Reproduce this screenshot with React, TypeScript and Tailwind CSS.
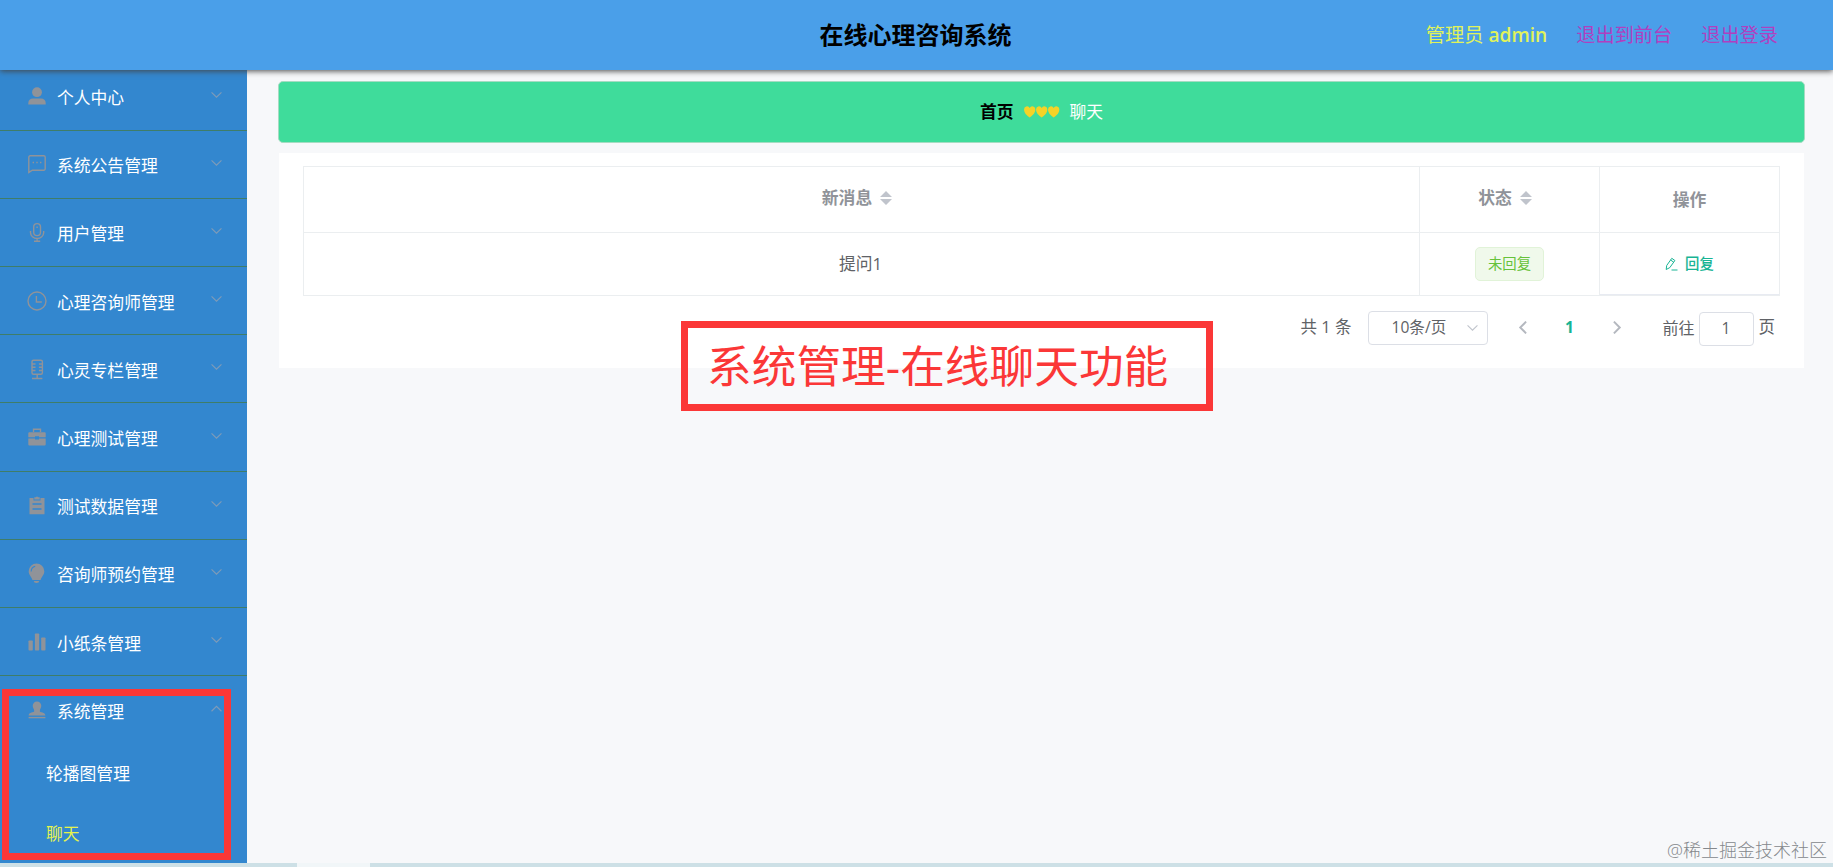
import React from "react";

type IconName =
  | "user" | "chat" | "mic" | "clock" | "studio" | "case" | "clip" | "bulb" | "bars" | "stamp";

const solid = { fill: "currentColor", stroke: "none" };

const icons: Record<IconName, React.ReactNode> = {
  user: (
    <g {...solid}>
      <circle cx="9" cy="5.2" r="4.9" />
      <path d="M0.3 17.6V16C0.3 13 2.3 11.4 4.9 11.4H13.1C15.7 11.4 17.7 13 17.7 16V17.6Z" />
    </g>
  ),
  chat: (
    <g>
      <path d="M0.8 17.4V2.2a1.4 1.4 0 0 1 1.4-1.4h13.6a1.4 1.4 0 0 1 1.4 1.4v11.6a1.4 1.4 0 0 1-1.400 1.400H4.400z" />
      <path d="M4.600 7.500h1.400M8.300 7.500h1.400M12 7.500h1.400" strokeWidth="1.5" />
    </g>
  ),
  mic: (
    <g>
      <rect x="5.7" y="0.600" width="6.800" height="12" rx="3.400" />
      <path d="M2.500 8v1.500a6.600 6 0 0 0 13.200 0V8M9.100 15.500v2.400M6 18.200h6.200M9.100 3.500v1.500" />
    </g>
  ),
  clock: (
    <g>
      <circle cx="9" cy="9" r="9" />
      <path d="M8.400 4v6h5.400" />
    </g>
  ),
  studio: (
    <g>
      <rect x="4" y="0.200" width="10.400" height="14" rx="1.500" />
      <path d="M4 4h3.500M4 7.300h3.500M4 10.500h3.500M14.400 4h-3.500M14.400 7.300h-3.500M14.400 10.500h-3.500M9.200 14.200v4M4 18.500h10.400" />
    </g>
  ),
  case: (
    <g>
      <path {...solid} d="M0.300 5.200a1 1 0 0 1 1-1h15.400a1 1 0 0 1 1 1v4H11v-1H7v1H0.300zM0.300 10.400H7v1.200h4v-1.200h6.700v6.200a1 1 0 0 1-1 1H1.300a1 1 0 0 1-1-1z" />
      <path d="M5.500 4V1.200h7V4" />
    </g>
  ),
  clip: (
    <g>
      <path {...solid} d="M1.500 2h4v2.500h7V2h4v16.300h-15z" />
      <path {...solid} d="M6.300 1.200h1.500a1.500 1.500 0 0 1 2.400 0h1.500v2.300H6.300z" />
      <path d="M4.500 8h9M4.500 13h9" stroke="#3387cf" strokeWidth="1.3" />
    </g>
  ),
  bulb: (
    <g>
      <path {...solid} d="M8.500-0.500a7.800 7.800 0 0 1 7.800 7.800c0 4-2.800 5.300-3.700 8.700H4.400C3.500 12.600 0.700 11.300 0.700 7.300A7.800 7.800 0 0 1 8.500-0.500zM5.800 17h5.400a2.700 2 0 0 1-5.400 0z" />
      <path d="M3.200 7.500a5.300 5.300 0 0 1 4-5.300" stroke="#3387cf" strokeWidth="1.1" />
    </g>
  ),
  bars: (
    <g {...solid}>
      <rect x="0.500" y="7.500" width="4.300" height="10" rx="0.700" />
      <rect x="6.900" y="0.500" width="4.300" height="17" rx="0.700" />
      <rect x="13.200" y="4.500" width="4.300" height="13" rx="0.700" />
    </g>
  ),
  stamp: (
    <g {...solid}>
      <path d="M9 0.500a4.300 4.300 0 0 1 4.300 4.300C13.300 7 11.800 7.800 11.800 10.200C11.800 11.600 17.400 11 17.400 14.500H0.600C0.600 11 6.200 11.600 6.200 10.200C6.200 7.800 4.700 7 4.700 4.800A4.300 4.300 0 0 1 9 0.500z" />
      <rect x="0.600" y="15.900" width="16.800" height="1.400" />
    </g>
  ),
};

function MenuIcon({ name }: { name: IconName }) {
  return (
    <svg className="h-[18px] w-[18px] overflow-visible text-[#909399]" viewBox="0 0 18 18" fill="none" stroke="currentColor" strokeWidth="1.4">
      {icons[name]}
    </svg>
  );
}

function Arrow({ className, d }: { className: string; d: string }) {
  return (
    <svg className={className} viewBox="0 0 10 10" fill="none" stroke="currentColor">
      <path d={d} />
    </svg>
  );
}

const menu: { icon: IconName; label: string; open?: boolean }[] = [
  { icon: "user", label: "个人中心" },
  { icon: "chat", label: "系统公告管理" },
  { icon: "mic", label: "用户管理" },
  { icon: "clock", label: "心理咨询师管理" },
  { icon: "studio", label: "心灵专栏管理" },
  { icon: "case", label: "心理测试管理" },
  { icon: "clip", label: "测试数据管理" },
  { icon: "bulb", label: "咨询师预约管理" },
  { icon: "bars", label: "小纸条管理" },
  { icon: "stamp", label: "系统管理", open: true },
];

function Sidebar() {
  return (
    <nav className="h-full w-[247px] shrink-0 overflow-hidden bg-[#3387cf] text-[16.8px] text-white">
      <ul className="-mt-[7.5px]">
        {menu.map((m) => (
          <li
            key={m.label}
            className={
              "flex h-[68.2px] items-center pl-7 pr-[25px] " +
              (m.open ? "" : "border-b border-[#3f7d68]")
            }
          >
            <MenuIcon name={m.icon} />
            <span className="ml-[11px] flex-1 pt-[4px] leading-6">{m.label}</span>
            <Arrow
              className="mb-[4px] h-[11px] w-[11px] text-[#7f9bb8]"
              d={m.open ? "M0.500 7.500 5 3 9.500 7.500" : "M0.500 3 5 7.500 9.500 3"}
            />
          </li>
        ))}
      </ul>
      <ul className="-mt-px pl-[46px]">
        <li className="flex h-[60px] items-center">轮播图管理</li>
        <li className="flex h-[60px] items-center pt-px text-[#e6f34d]">聊天</li>
      </ul>
    </nav>
  );
}

function Header() {
  return (
    <header className="relative z-10 grid h-[70px] shrink-0 grid-cols-3 items-center bg-[#4a9fe9] shadow-[0_1px_6px_#444]">
      <div />
      <h1 className="pr-[2px] text-center text-[24px] font-bold text-black">在线心理咨询系统</h1>
      <div className="flex justify-end gap-[29px] pr-[55px] text-[19.2px] text-[#b03fc0]">
        <span className="text-[#e0f35a]">
          管理员 <span className="font-semibold">admin</span>
        </span>
        <span>退出到前台</span>
        <span>退出登录</span>
      </div>
    </header>
  );
}

function Hearts() {
  return (
    <svg className="h-[12px] w-[36px]" viewBox="0 0 36 12" fill="#f5d327">
      {[0, 12, 24].map((x) => (
        <path key={x} transform={`translate(${x} 0)`} d="M5.700 11.600C3 9.500 0.100 7 0.100 3.700A3 3 0 0 1 5.700 1.900 3 3 0 0 1 11.300 3.700C11.300 7 8.400 9.500 5.700 11.600z" />
      ))}
    </svg>
  );
}

function Sorter() {
  return (
    <svg className="h-[14px] w-[12px]" viewBox="0 0 12 14" fill="#c0c4cc">
      <path d="M6 0 12 6H0zM6 14 0 8h12z" />
    </svg>
  );
}

function Table() {
  return (
    <div className="grid grid-cols-[1116px_180px_180px] border-l border-t border-[#ebeef0] text-[16.8px]">
      <div className="flex h-[66px] items-center justify-center gap-[8px] border-b border-r border-[#ebeef0] pb-[3px] pr-[9px] font-bold text-[#909399]">
        新消息 <Sorter />
      </div>
      <div className="flex h-[66px] items-center justify-center gap-[8px] border-b border-r border-[#ebeef0] pb-[3px] pr-[9px] font-bold text-[#909399]">
        状态 <Sorter />
      </div>
      <div className="flex h-[66px] items-center justify-center border-b border-r border-[#ebeef0] font-bold text-[#909399]">
        操作
      </div>
      <div className="flex h-[63px] items-center justify-center border-b border-r border-[#ebeef0] pr-[2px] text-[#606266]">
        提问1
      </div>
      <div className="flex h-[63px] items-center justify-center border-b border-r border-[#ebeef0]">
        <span className="flex h-[34px] w-[69px] items-center justify-center rounded-[5px] border border-[#e1f3d8] bg-[#f0f9eb] text-[14.4px] text-[#67c23a]">
          未回复
        </span>
      </div>
      <div className="flex h-[63px] items-center justify-center gap-[7px] border-b border-r border-[#ebeef0] text-[14.4px] font-medium text-[#18b494] shadow-[inset_0_-1px_#e8ebf2]">
        <svg className="h-[14px] w-[13px]" viewBox="0 0 13 14" fill="none" stroke="currentColor" strokeWidth="1">
          <path d="M1.200 12.500 1.700 8.500 6.800 1.300 9.900 3.500 4.800 10.600zM5.600 3 8.700 5.200M6.500 13h6" />
        </svg>
        回复
      </div>
    </div>
  );
}

function Pagination() {
  return (
    <div className="mt-[13px] flex h-[37px] items-center justify-end pr-[5px] text-[15.6px] text-[#606266]">
      <span className="text-[16.5px]">共 1 条</span>
      <div className="ml-[17px] flex h-[34px] w-[120px] items-center justify-between rounded-[4px] border border-[#dcdfe6] pl-[22px] pr-[9px]">
        10条/页
        <Arrow className="h-[11px] w-[11px] text-[#c0c4cc]" d="M0.500 3 5 7.500 9.500 3" />
      </div>
      <Arrow className="ml-[29px] h-[13px] w-[13px] stroke-[1.5] text-[#b4b8bf]" d="M7 0.500 2.500 5 7 9.500" />
      <span className="w-[80px] pr-[2px] text-center font-bold text-[#18b494]">1</span>
      <Arrow className="h-[13px] w-[13px] stroke-[1.5] text-[#b4b8bf]" d="M3 0.500 7.500 5 3 9.500" />
      <span className="ml-[39px] text-[16px]">前往</span>
      <span className="ml-[4px] mt-[2px] flex h-[34px] w-[55px] items-center justify-center rounded-[4px] border border-[#dcdfe6]">1</span>
      <span className="ml-[5px] text-[16.5px]">页</span>
    </div>
  );
}

export default function App() {
  return (
    <div className="relative flex h-[867px] w-[1833px] flex-col overflow-hidden bg-[#f7f8fa] font-['Open_Sans','Noto_Sans_CJK_SC',sans-serif]">
      <Header />
      <div className="flex h-[793px] shrink-0">
        <Sidebar />
        <main className="flex flex-1 flex-col pl-[31px] pr-[28px] pt-[11px]">
          <div className="flex h-[62px] items-center justify-center gap-[10px] rounded-[5px] border border-[#a5dcc2] bg-[#3fdc9b] text-[16.8px] text-white">
            <span className="font-bold text-black">首页</span>
            <Hearts />
            <span>聊天</span>
          </div>
          <section className="mx-px mt-[10px] h-[215px] bg-white pl-[24px] pr-[24px] pt-[13px]">
            <Table />
            <Pagination />
          </section>
        </main>
      </div>
      <div className="flex h-1 shrink-0 bg-[#cde0e6]">
        <div className="ml-[297px] w-[73px] bg-[#f1f6f8]" />
      </div>

      <div className="absolute left-[681px] top-[321px] z-20 flex h-[90px] w-[532px] items-center whitespace-nowrap border-[7px] border-[#fb3737] pl-[19px] text-[44.7px] leading-none text-[#fb3737]">
        系统管理-在线聊天功能
      </div>
      <div className="absolute left-[2px] top-[689px] z-20 h-[171px] w-[229px] border-[7px] border-[#fb3737]" />
      <div className="absolute right-[6px] top-[838px] z-20 text-[18px] font-light leading-6 text-[#85888c]">@稀土掘金技术社区</div>
    </div>
  );
}
